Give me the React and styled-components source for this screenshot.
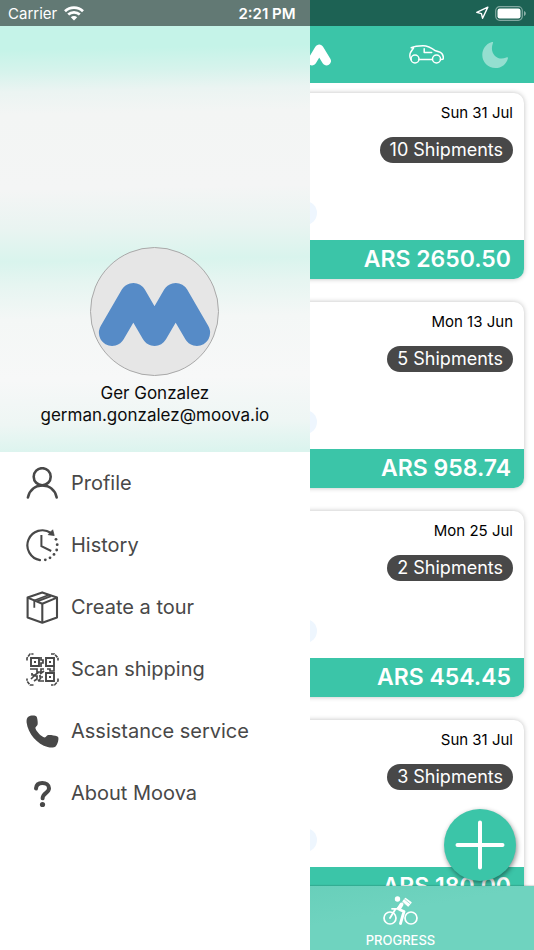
import styled, { createGlobalStyle } from "styled-components";
import { Navigation } from "lucide-react";

const GlobalStyle = createGlobalStyle`
  * {
    box-sizing: border-box;
  }

  body {
    margin: 0;
    background: #fff;
    font-family: Inter, "Liberation Sans", sans-serif;
  }

  button {
    border: 0;
    padding: 0;
    background: none;
    color: inherit;
    font: inherit;
    cursor: pointer;
  }

  svg {
    display: block;
    flex: none;
  }
`;

const Screen = styled.div`
  position: relative;
  display: flex;
  flex-direction: column;
  height: 100vh;
  overflow: hidden;
`;

const StatusBar = styled.div`
  position: absolute;
  top: 0;
  left: 0;
  right: 0;
  z-index: 3;
  display: grid;
  grid-template-columns: 1fr auto 1fr;
  align-items: center;
  height: 26px;
  padding: 0 8px;
  background: rgba(0, 0, 0, 0.5);
  color: #fff;
  font-size: 15px;

  .carrier {
    display: flex;
    align-items: center;
    gap: 7px;
  }

  .time {
    font-weight: 600;
  }

  .battery {
    display: flex;
    align-items: center;
    justify-content: flex-end;
    gap: 6px;
  }
`;

const Header = styled.header`
  flex: none;
  display: grid;
  grid-template-columns: 1fr auto 1fr;
  align-items: center;
  padding: 26px 26px 0;
  height: 83px;
  background: #3bc5a8;

  .actions {
    display: flex;
    justify-content: flex-end;
    align-items: center;
    gap: 38px;
  }
`;

const TourList = styled.main`
  flex: 1;
  min-height: 0;
  overflow: hidden;
  display: flex;
  flex-direction: column;
  gap: 23px;
  padding: 10px;
`;

const Card = styled.article`
  flex: none;
  display: flex;
  flex-direction: column;
  height: 186px;
  border-radius: 10px;
  overflow: hidden;
  background: #fff;
  box-shadow: 0 0 5px rgba(0, 0, 0, 0.25);
`;

const CardBody = styled.div`
  flex: 1;
  display: flex;
  flex-direction: column;
  align-items: flex-end;
  padding: 10px 11px 0 0;

  time {
    color: #000;
    font-size: 15px;
    line-height: 20px;
  }
`;

const Pill = styled.span`
  margin-top: 14px;
  padding: 0 10px;
  border-radius: 13px;
  background: #484848;
  color: #fff;
  font-size: 18px;
  line-height: 26px;
`;

const Route = styled.div`
  align-self: flex-start;
  display: flex;
  justify-content: flex-end;
  width: 61%;
  margin-top: 38px;

  span {
    width: 24px;
    height: 24px;
    border-radius: 50%;
    background: #eef6fe;
  }
`;

const Amount = styled.div`
  padding-right: 13px;
  background: #3bc5a8;
  color: #fff;
  font-size: 23px;
  font-weight: 600;
  line-height: 39px;
  text-align: right;
`;

const AddButton = styled.button`
  position: absolute;
  right: 18px;
  bottom: 69px;
  z-index: 1;
  display: grid;
  place-items: center;
  width: 72px;
  height: 72px;
  && {
    background: #3bc5a8;
  }
  border-radius: 50%;
  box-shadow: 1px 2px 5px rgba(0, 0, 0, 0.45);
`;

const TabBar = styled.nav`
  flex: none;
  display: grid;
  grid-template-columns: 1fr 1fr;
  height: 64px;
  background: linear-gradient(170deg, #5fcab4, #6fd3bf 60%);
  box-shadow: 0 -1px 1px rgba(0, 0, 0, 0.12);
`;

const Tab = styled.button`
  grid-column: 2;
  display: flex;
  flex-direction: column;
  align-items: center;
  gap: 7px;
  && {
    padding-top: 10px;
    color: #fff;
    font-size: 13px;
    font-weight: 500;
    line-height: 16px;
  }
`;

const Drawer = styled.aside`
  position: absolute;
  top: 0;
  bottom: 0;
  left: 0;
  z-index: 2;
  width: 58%;
  background: #fff;
`;

const Account = styled.section`
  display: flex;
  flex-direction: column;
  align-items: center;
  height: 452px;
  padding: 247px 0 0;
  background: linear-gradient(
    179deg,
    #c5f3e8 0,
    #c5f3e8 50px,
    #d6f3ec 72px,
    #ebf4f2 92px,
    #f3f5f4 115px,
    #f4f5f5 190px,
    #e9f4f1 230px,
    #d9f4ed 262px,
    #e6f5f1 285px,
    #f4f7f6 320px,
    #f7f8f8 380px,
    #eef6f4 425px,
    #dbf4ee 455px
  );
  color: #0c0c0c;
  font-size: 17px;
  line-height: 22px;

  .avatar {
    margin-bottom: 6px;
    border: 1px solid #a9a9a9;
    border-radius: 50%;
    background: #e6e6e6;
  }
`;

const Menu = styled.nav`
  display: flex;
  flex-direction: column;
`;

const MenuLink = styled.a`
  display: flex;
  align-items: center;
  gap: 12px;
  height: 62px;
  padding-left: 26px;
  color: #484848;
  font-size: 20px;
  text-decoration: none;
`;

const tours = [
  { id: 1, date: "Sun 31 Jul", shipments: 10, amount: "2650.50" },
  { id: 2, date: "Mon 13 Jun", shipments: 5, amount: "958.74" },
  { id: 3, date: "Mon 25 Jul", shipments: 2, amount: "454.45" },
  { id: 4, date: "Sun 31 Jul", shipments: 3, amount: "180.00" },
];

const menu = [
  { label: "Profile", Icon: ProfileIcon },
  { label: "History", Icon: HistoryIcon },
  { label: "Create a tour", Icon: BoxIcon },
  { label: "Scan shipping", Icon: ScanIcon },
  { label: "Assistance service", Icon: PhoneIcon },
  { label: "About Moova", Icon: QuestionIcon },
];

export default function App() {
  return (
    <Screen>
      <GlobalStyle />
      <StatusBar>
        <span className="carrier">
          Carrier
          <WifiIcon />
        </span>
        <span className="time">2:21 PM</span>
        <span className="battery">
          <Navigation size={14} strokeWidth={2.4} />
          <BatteryIcon />
        </span>
      </StatusBar>

      <Header>
        <span />
        <Logo />
        <div className="actions">
          <button aria-label="Vehicle">
            <CarIcon />
          </button>
          <button aria-label="Dark mode">
            <MoonIcon />
          </button>
        </div>
      </Header>

      <TourList>
        {tours.map((tour) => (
          <Tour key={tour.id} {...tour} />
        ))}
      </TourList>

      <AddButton aria-label="Add">
        <svg width="50" height="50" viewBox="0 0 50 50" stroke="#fff" strokeWidth="4" strokeLinecap="round">
          <path d="M25 2.500v45M2.500 25h45" />
        </svg>
      </AddButton>

      <TabBar>
        <Tab>
          <BikeIcon />
          PROGRESS
        </Tab>
      </TabBar>

      <Drawer>
        <Account>
          <svg className="avatar" width="129" height="129" viewBox="0 0 129 129">
            <path
              d="M21.500 86 43 49 64.500 86 86 49 107.500 86"
              fill="none"
              stroke="#568bc7"
              strokeWidth="27"
              strokeLinecap="round"
              strokeLinejoin="round"
            />
          </svg>
          <span>Ger Gonzalez</span>
          <span>german.gonzalez@moova.io</span>
        </Account>
        <Menu>
          {menu.map(({ label, Icon }) => (
            <MenuLink key={label} href="#">
              <Icon />
              {label}
            </MenuLink>
          ))}
        </Menu>
      </Drawer>
    </Screen>
  );
}

function Tour({ date, shipments, amount }) {
  return (
    <Card>
      <CardBody>
        <time>{date}</time>
        <Pill>{shipments} Shipments</Pill>
        <Route>
          <span />
        </Route>
      </CardBody>
      <Amount>ARS {amount}</Amount>
    </Card>
  );
}

function Logo() {
  return (
    <svg
      width="128"
      height="22"
      viewBox="0 0 128 22"
      fill="none"
      stroke="#fff"
      strokeWidth="9"
      strokeLinecap="round"
      strokeLinejoin="round"
    >
      <path d="M4.500 17 11 5l7 12 7-12 7 12" />
      <circle cx="48" cy="11" r="6" />
      <circle cx="72" cy="11" r="6" />
      <path d="m88 5 7 12 7-12" />
      <path d="m109 17 7.200-12L123.500 17" />
    </svg>
  );
}

function WifiIcon() {
  return (
    <svg width="20" height="15" viewBox="0 0 20 15" fill="none" stroke="#fff" strokeWidth="2.700">
      <path d="M1 5.200a13 13 0 0 1 18 0M4.200 8.600a8.400 8.400 0 0 1 11.600 0" />
      <path d="M10 14.500 6.800 11.300a4.600 4.600 0 0 1 6.400 0Z" fill="#fff" stroke="none" />
    </svg>
  );
}

function BatteryIcon() {
  return (
    <svg width="31" height="15" viewBox="0 0 31 15">
      <rect x=".7" y=".7" width="26.600" height="13.600" rx="4" fill="none" stroke="#fff" strokeOpacity=".45" strokeWidth="1.200" />
      <rect x="2.500" y="2.500" width="23" height="10" rx="2.200" fill="#fff" />
      <path d="M29 5v5c1.200-.4 1.800-1.400 1.800-2.500S30.200 5.400 29 5Z" fill="#fff" fillOpacity=".5" />
    </svg>
  );
}

function CarIcon() {
  return (
    <svg width="35" height="19" viewBox="0 0 35 19" fill="none" stroke="#fff" strokeWidth="1.500" strokeLinejoin="round" strokeLinecap="round">
      <path d="M2 14.500C.7 13 .5 9.500 1.500 7.500L4.500 3 2.200 2.800C6 1 10 .8 14 .8c5 0 8 1.700 12.500 5 3 .7 5.500 1.400 6.700 3.200 1 1.700 1.300 4 .8 5.200l-2.500.3M10 14.500h13" />
      <circle cx="6" cy="14" r="4" />
      <circle cx="27.500" cy="14" r="4" />
      <path d="M15.200 3.800v3.700h7.500" />
    </svg>
  );
}

function MoonIcon() {
  return (
    <svg width="26" height="26" viewBox="0 0 26 26">
      <path
        d="M9.300.3C11.300-.3 11.300.2 10.800 1.500 9 6.500 10 11 13 14c3 2.800 7.300 3.300 11.300 1.500 1.200-.6 1.900-.4 1.600.9C24.500 22 19.500 26 13.500 26 6 26 .3 20.300.3 13 .3 7 4 1.900 9.300.3Z"
        fill="#94dfd0"
      />
    </svg>
  );
}

function BikeIcon() {
  return (
    <svg width="35" height="29" viewBox="0 0 35 29" fill="none" stroke="#fff" strokeLinecap="round" strokeLinejoin="round">
      <circle cx="7" cy="22" r="6" strokeWidth="1.700" />
      <circle cx="28" cy="22" r="6" strokeWidth="1.700" />
      <circle cx="14.500" cy="3" r="2.700" fill="#fff" stroke="none" />
      <path d="M7 22 12.500 13M9 12.800h5l3-3" strokeWidth="1.800" />
      <path d="m18.500 8.500-2.500 4" strokeWidth="4" />
      <path d="m17.500 14 3.500 1.500-1.500 5-2 7" strokeWidth="2.800" />
      <path d="m22.500 2.500 5.500 4-3 3.500-5.300-4Z" fill="#fff" strokeWidth="1.400" />
      <path d="m19 5.500 5.500 5.200M21.500 3.200l5.500 4.500" stroke="#66ceb9" strokeWidth=".6" />
    </svg>
  );
}

function MenuSvg({ children, ...props }) {
  return (
    <svg width="33" height="33" viewBox="0 0 33 33" fill="none" stroke="currentColor" strokeWidth="2.200" {...props}>
      {children}
    </svg>
  );
}

function ProfileIcon() {
  return (
    <MenuSvg strokeWidth="2.600" strokeLinecap="round">
      <circle cx="16.200" cy="9.700" r="8.500" />
      <path d="M1.900 30.500C3.500 23 9 18.500 16.300 18.500S29.200 23 30.700 30.500" />
    </MenuSvg>
  );
}

function HistoryIcon() {
  const dots = [
    [30, 10.3],
    [31.2, 15.7],
    [30.7, 21],
    [28, 25.4],
    [24, 28.8],
    [19.3, 30.8],
  ];

  return (
    <MenuSvg>
      <path d="M14 31.100A15 15 0 1 1 25 4" strokeLinecap="round" />
      <path d="M26.700.8 28.200 6.500 22.200 5.700Z" fill="currentColor" stroke="currentColor" strokeWidth=".8" />
      <path d="M15.400 6v11.200l9.800 4.800" strokeWidth="2" />
      {dots.map(([x, y]) => (
        <circle key={y} cx={x} cy={y} r="1.400" fill="currentColor" stroke="none" />
      ))}
    </MenuSvg>
  );
}

function BoxIcon() {
  return (
    <MenuSvg strokeWidth="2.100" strokeLinejoin="round">
      <path d="M1.600 6.600 16.200 1.400 31 6.600v20L16.300 31.700 1.600 26.600Z" />
      <path d="m1.600 6.600 14.700 6.200L31 6.600M16.300 12.800V32" />
      <path d="M8.300 16.700V9.500L22.600 4M11.200 10.300l13.900-5.200" strokeWidth="1.800" />
    </MenuSvg>
  );
}

function ScanIcon() {
  return (
    <MenuSvg>
      <path
        d="M1 7.500V5l3-4h3.500M25 1h3.500L32 5v2.500M32 25.500V28l-3.500 4H25M7.500 32H4l-3-4v-2.500"
        strokeWidth="1.600"
        strokeDasharray="3.600 .8"
      />
      <path d="M5 5h8v8H5ZM20 5h8v8h-8ZM20 20h8v8h-8Z" strokeWidth="1.900" />
      <path d="M8 8h2v2H8ZM23 8h2v2h-2ZM23 23h2v2h-2Z" fill="currentColor" stroke="none" />
      <path
        d="M15 4v3h2v3h-2v4M4 16h7v3h4v-3h3M21 16h3v2h4v-2M6 20v2h3l4-3M5 26l3-3h3v3l-3 2M14 21l4-3M14 22v2h3M12 28h6M15 25l-3 3M28 14v4"
        strokeWidth="1.700"
      />
    </MenuSvg>
  );
}

function PhoneIcon() {
  return (
    <MenuSvg fill="currentColor" stroke="none">
      <path d="M2.300 1.800C4 .4 7.500.3 9.700.9c1.200.4 1.500 2 1.700 3.600.3 2 .5 3.800.2 5-.4 1.500-2 2.200-2.200 3.300-.2 1.700 3.500 6.500 6.300 8.300 1.300.9 2.600 1.600 3.600 1.200 1-.5 1.500-1.900 2.700-2.200 2-.4 6.700.4 9 1.200 1.200.4 1.600 1.500 1.400 3.200-.3 2.500-1.200 5.400-2.800 7-1.500 1.400-5 1.200-8 .5C11.500 29.500 1.800 18.500.6 7.500.4 5 .8 3 2.300 1.800Z" />
    </MenuSvg>
  );
}

function QuestionIcon() {
  return (
    <MenuSvg strokeWidth="4" strokeLinecap="round" strokeLinejoin="round">
      <path d="M10 11.500C10.300 7.500 13 6 16.300 6c3.700 0 6.700 2 6.700 5.300 0 4.700-6 4.500-6.400 10" />
      <circle cx="16.500" cy="27.500" r="2.600" fill="currentColor" stroke="none" />
    </MenuSvg>
  );
}
